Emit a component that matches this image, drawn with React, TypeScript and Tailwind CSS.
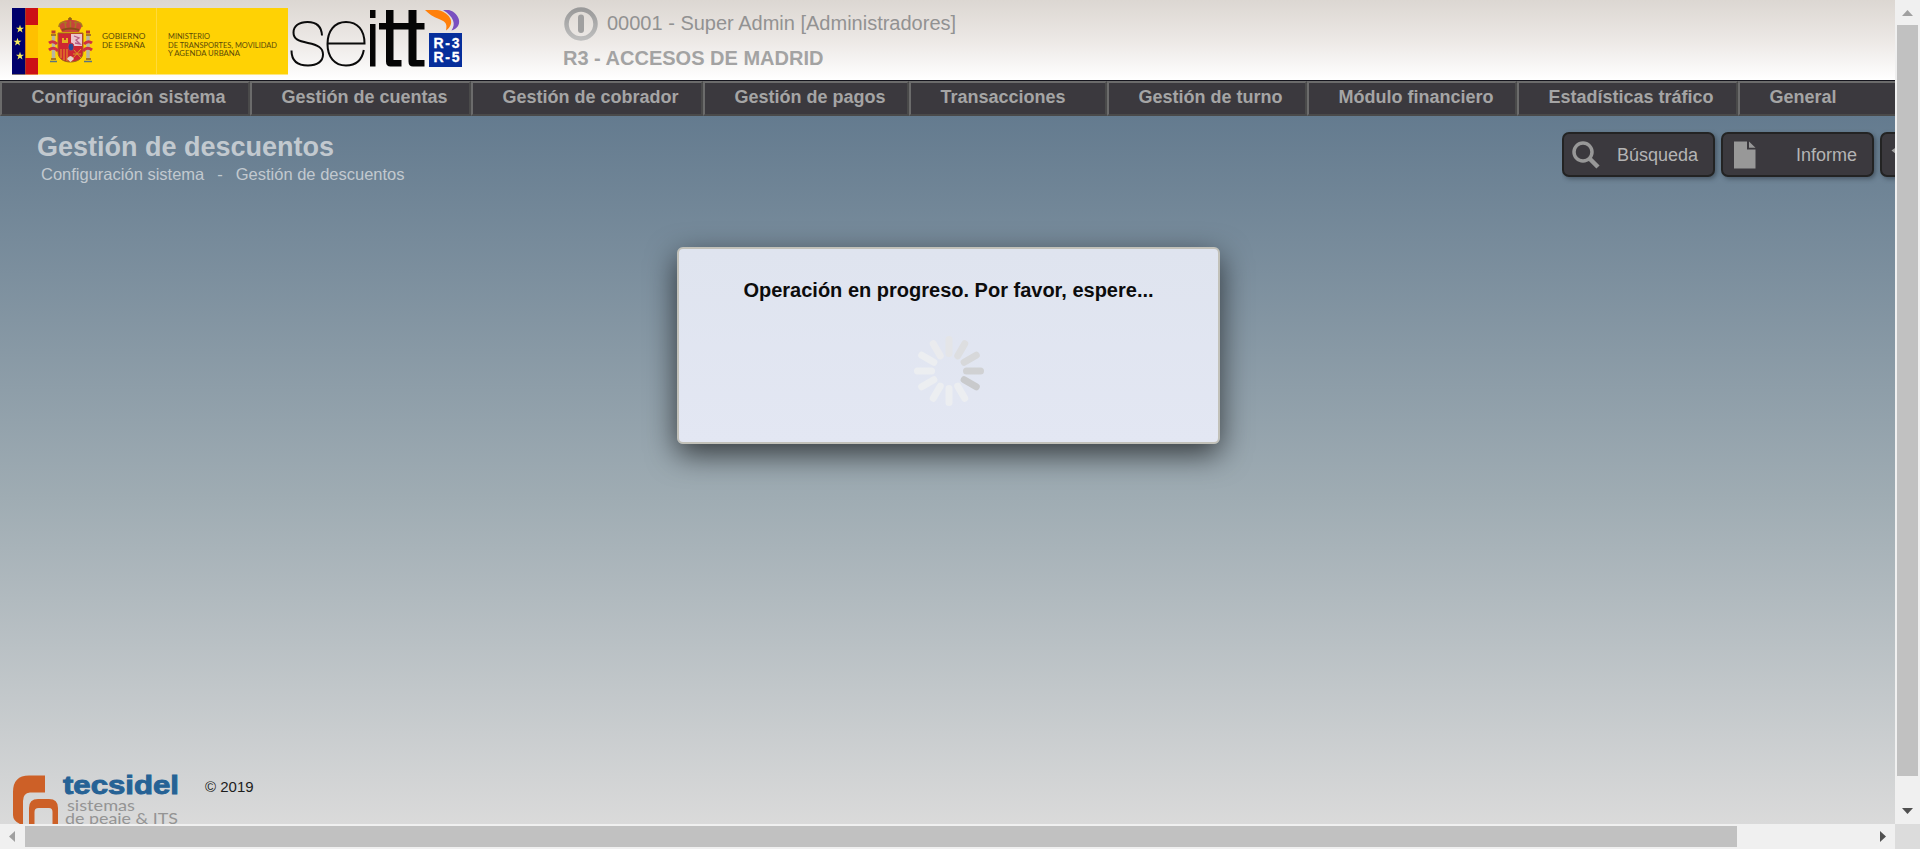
import React from "react";

const menu = [
  { label: "Configuración sistema", width: "w-[250px]" },
  { label: "Gestión de cuentas", width: "w-[221px]" },
  { label: "Gestión de cobrador", width: "w-[232px]" },
  { label: "Gestión de pagos", width: "w-[206px]" },
  { label: "Transacciones", width: "w-[198px]" },
  { label: "Gestión de turno", width: "w-[200px]" },
  { label: "Módulo financiero", width: "w-[210px]" },
  { label: "Estadísticas tráfico", width: "w-[221px]" },
  { label: "General", width: "w-[200px]" },
];

const spokes = [
  "#e4e5e8", "#dddee0", "#d7d8da", "#d0d1d3", "#c9cacc", "#eceef1",
  "#eceef1", "#eceef1", "#eceef1", "#eceef1", "#eceef1", "#eaebee",
];

function Star({ x, y }: { x: number; y: number }) {
  return (
    <path
      transform={`translate(${x} ${y})`}
      d="M0-4.2 1-1.3H4L1.6.5 2.5 3.5 0 1.7-2.5 3.5-1.6.5-4-1.3H-1Z"
      fill="#f4ea5c"
    />
  );
}

function Logos() {
  return (
    <svg width="455" height="68" viewBox="12 7 455 68" className="block">
      <rect x="12" y="8" width="276" height="66.500" fill="#ffd204" />
      <path d="M156.500 8V74" stroke="#ffda3a" />
      <rect x="12" y="8" width="13.500" height="66.500" fill="#00006c" />
      <rect x="25.500" y="8" width="12.500" height="66.500" fill="#cc1016" />
      <rect x="25.500" y="25" width="12.500" height="33" fill="#ffc000" />
      <Star x={20} y={29} />
      <Star x={17.500} y={42} />
      <Star x={20} y={56} />

      <g>
        <path d="M70 17v5M68 19h4" stroke="#8a5a18" strokeWidth="1.300" />
        <path d="M59 26c1-5 6-6 11.500-6S81 21 82 26l-3 6H62Z" fill="#c7443a" />
        <path d="M59 27c0-5 5-6 8-4M82 27c0-5-5-6-8-4M70.500 21v8M65 23l1 6M76 23l-1 6" fill="none" stroke="#a87822" strokeWidth="1.500" />
        <path d="M62 30q8.500-3 17 0" fill="none" stroke="#8a4a1a" strokeWidth="2" />
        <path d="M58 33H83V52C83 59 77 62 70.500 62S58 59 58 52Z" fill="#ce2632" stroke="#9d6a1c" />
        <path d="M71 34H82V46H71Z" fill="#ebc5cc" />
        <path d="m74 36 5 2-3 2 4 4-5-1" fill="none" stroke="#b75b83" strokeWidth="1.300" />
        <path d="M62 43v-5h2v2h2v-2h2v5Z" fill="#e4ae20" />
        <path d="M61 49v9M64 49v11M67 49v12" stroke="#e8a020" />
        <path d="m73 49 8 9m0-9-8 9m0-4h8" stroke="#d99a22" fill="none" />
        <ellipse cx="71" cy="47" rx="3" ry="4" fill="#284a96" stroke="#cf3440" />
        <path d="M67 59q3.500-6 7 0l-3.500 3Z" fill="#e5d5c7" />
        <path d="M53.500 36V58M88 36V58" stroke="#b9b5a0" strokeWidth="3.500" />
        <path d="M49 43q4-3 8 1M49 50q5-4 9 1M92 43q-4-3-8 1M92 50q-5-4-9 1" fill="none" stroke="#cf3440" strokeWidth="3" />
        <path d="M51 35h5M86 35h5M51 59h5M86 59h5" stroke="#a87822" strokeWidth="2" />
        <path d="M51.500 32h4M86 32h4" stroke="#bd3e2c" strokeWidth="3" />
        <path d="M50 61.500h7M84 61.500h8" stroke="#5c7480" strokeWidth="1.500" />
      </g>

      <g fill="#5b4a08" fontFamily="Lato, sans-serif" fontSize="7.500">
        <text x="102" y="38.500" textLength="43.500" lengthAdjust="spacingAndGlyphs">GOBIERNO</text>
        <text x="102" y="47.500" textLength="43" lengthAdjust="spacingAndGlyphs">DE ESPAÑA</text>
        <text x="168" y="38.500" textLength="42" lengthAdjust="spacingAndGlyphs">MINISTERIO</text>
        <text x="168" y="47.500" textLength="109" lengthAdjust="spacingAndGlyphs">DE TRANSPORTES, MOVILIDAD</text>
        <text x="168" y="56" textLength="72" lengthAdjust="spacingAndGlyphs">Y AGENDA URBANA</text>
      </g>

      <g fill="none" stroke="#0b0b0b" strokeWidth="2">
        <path d="M322 35.500C321.500 26 316 22 307.500 22C299 22 293.500 26 293.500 32.500C293.500 39 298 41 308 43C318 45 323 48 323 54.500C323 61.500 317 65.500 308 65.500C297 65.500 291.500 60 291.500 50.500" />
        <path d="M327.500 43.500H364.500C364.500 30 357.500 22 346 22C334.500 22 327.500 31 327.500 44C327.500 57 334.500 65.500 346 65.500C355.500 65.500 362 60 363.800 50" />
      </g>
      <path d="M370 10h5.500v8H370ZM370 24h5.500v42.500H370ZM386 10h7.500v13h15V10h8v13h8v6.500h-8V60h8v6.500h-11.500q-4.500 0-4.500-5V29.500h-15V60h8v6.500H390.500q-4.500 0-4.500-5V29.500h-7V23h7Z" fill="#050505" />
      <path d="M443 10H449C460 13 464 27 451.500 30.500C456 24 454 17 443 10Z" fill="#7950c0" />
      <path d="M425 10H437C447 11 458 22 446 30.500C447 25 447 22 439 19C433 17 429 14 425 10Z" fill="#ff800b" />
      <rect x="429" y="33" width="33" height="34" fill="#062e9b" />
      <g fill="#fff" fontFamily="Liberation Sans, sans-serif" fontWeight="bold" fontSize="14">
        <text x="433.500" y="48.300" textLength="26" stroke="#fff" strokeWidth=".3">R-3</text>
        <text x="433.500" y="61.500" textLength="26" stroke="#fff" strokeWidth=".3">R-5</text>
      </g>
    </svg>
  );
}

function Header() {
  return (
    <header className="flex h-20 shrink-0 bg-linear-to-b from-[#dcd7d2] via-[#ece8e5] to-white pl-3">
      <div className="w-[551px] shrink-0 pt-[7px]">
        <Logos />
      </div>
      <div className="pt-[7px] text-[#9b9b9b]">
        <div className="flex h-[34px] items-center gap-[9px] text-[20px] leading-none">
          <svg width="35" height="35" viewBox="0 0 35 35">
            <defs>
              <linearGradient id="power" x1="0" y1="0" x2="0" y2="1">
                <stop offset="0" stopColor="#9a9a9a" />
                <stop offset="1" stopColor="#bdbdbd" />
              </linearGradient>
            </defs>
            <circle cx="18" cy="17" r="14.500" fill="none" stroke="url(#power)" strokeWidth="4.500" />
            <rect x="15" y="7.500" width="6" height="18.500" rx="3" fill="#a0a0a0" />
          </svg>
          <span className="-mt-[2px] whitespace-nowrap text-[#929292]">00001 - Super Admin [Administradores]</span>
        </div>
        <div className="mt-[6px] text-[20px] leading-[23px] font-bold whitespace-nowrap text-[#a3a3a3]">
          R3 - ACCESOS DE MADRID
        </div>
      </div>
    </header>
  );
}

function ToolButton({ label, children }: { label?: string; children: React.ReactNode }) {
  return (
    <div className="flex h-[45px] w-[153px] shrink-0 items-center justify-between rounded-[7px] border-2 border-[#232323] bg-[#3b393e] pr-[15px] pl-[8px] text-[18px] text-[#b4b4b4] shadow-[2px_2px_4px_rgba(40,50,60,0.5)]">
      {children}
      <span className="pt-[2px]">{label}</span>
    </div>
  );
}

function Footer() {
  return (
    <footer className="mt-auto flex h-[51px] overflow-hidden pl-3">
      <svg width="170" height="51" viewBox="12 773 170 51" className="shrink-0">
        <path d="M45 775.500V792.500H30Q23 793 23 801V824H20Q13 821 13 815V792Q13 775.500 29 775.500Z" fill="#cd6027" />
        <path d="M29 824V808Q29 799 38 799H49Q58 799 58 808V824H52.500V812Q52.500 808 49 808H38.500Q34.500 808 34.500 812V824Z" fill="#cd6027" />
        <text x="63" y="793.700" fill="#266295" stroke="#266295" strokeWidth=".9" fontFamily="Liberation Sans, sans-serif" fontWeight="bold" fontSize="26" textLength="116" lengthAdjust="spacingAndGlyphs">tecsidel</text>
        <g fill="#949494" fontFamily="Lato, sans-serif" fontSize="16">
          <text x="67" y="810.500" textLength="68" lengthAdjust="spacingAndGlyphs">sistemas</text>
          <text x="65" y="824.300" textLength="113" lengthAdjust="spacingAndGlyphs">de peaje &amp; ITS</text>
        </g>
      </svg>
      <span className="ml-[23px] pt-[5px] text-[15px] leading-[18px] text-[#1d1d1d]">© 2019</span>
    </footer>
  );
}

function Spinner() {
  return (
    <svg width="72" height="80" viewBox="-36 -40 72 80">
      {spokes.map((color, i) => {
        const a = (i * Math.PI) / 6;
        const rx = Math.sin(a);
        const ry = -Math.cos(a);
        return (
          <line
            key={i}
            x1={rx * 17.500}
            y1={ry * 17.500}
            x2={rx * 31.500}
            y2={ry * 31.500}
            stroke={color}
            strokeWidth="7"
            strokeLinecap="round"
          />
        );
      })}
    </svg>
  );
}

export default function App() {
  return (
    <div className="relative grid h-[849px] w-[1920px] grid-cols-[1895px_25px] grid-rows-[824px_25px] overflow-hidden bg-[#f0f0f0] font-['Liberation_Sans',sans-serif]">
      <div className="flex min-w-0 flex-col overflow-hidden">
        <Header />
        <nav className="flex h-9 shrink-0 overflow-hidden border-t border-[#14141c] bg-[#3b393e]">
          {menu.map((item) => (
            <div
              key={item.label}
              className={`${item.width} shrink-0 border-2 border-t-[#6b6b6b] border-r-[#4a4a4a] border-b-[#4a4a4a] border-l-[#6b6b6b] pl-[29.500px] text-[18px] leading-[29px] font-bold whitespace-nowrap text-[#a5a5a5]`}
            >
              {item.label}
            </div>
          ))}
        </nav>
        <main className="flex min-h-0 flex-1 flex-col bg-linear-to-b from-[#647b8f] from-0% via-[#9facb3] via-54% to-[#dadada] to-100%">
          <div className="flex items-start justify-between">
            <div className="pt-[15px] pl-[37px] text-[#c2c9cf]">
              <h1 className="text-[27px] leading-[32px] font-bold">Gestión de descuentos</h1>
              <div className="flex gap-[13px] pl-[4px] text-[16.500px] leading-[22px]">
                <span>Configuración sistema</span>
                <span>-</span>
                <span>Gestión de descuentos</span>
              </div>
            </div>
            <div className="flex w-[333px] gap-[6px] overflow-hidden pt-4 pb-2">
              <ToolButton label="Búsqueda">
                <svg width="28" height="28" viewBox="0 0 28 28" fill="none" stroke="#989898">
                  <circle cx="11" cy="11" r="9" strokeWidth="3.500" />
                  <path d="m17.500 17.500 8.500 8.500" strokeWidth="4.500" />
                </svg>
              </ToolButton>
              <ToolButton label="Informe">
                <svg width="28" height="28" viewBox="0 0 28 28" fill="#989898">
                  <path d="M3 .5H16V8.500H24.500V27.500H3ZM18 .5 24.500 6.800H18Z" />
                </svg>
              </ToolButton>
              <ToolButton>
                <svg width="28" height="28" viewBox="0 0 28 28" fill="none" stroke="#a5a5a5">
                  <path d="m10 5-6 4.500 6 4.500M4 9.500h12q9 0 9 8t-9 8H8" strokeWidth="3" />
                </svg>
              </ToolButton>
            </div>
          </div>
          <Footer />
        </main>
      </div>

      <div className="flex flex-col items-center justify-between pt-[10px] pb-[10px]">
        <svg width="11" height="6" viewBox="0 0 11 6" className="shrink-0"><path d="M0 6 5.500 0 11 6Z" fill="#a0a0a0" /></svg>
        <div className="mt-[9px] mb-auto h-[751px] w-[21px] bg-[#c1c1c1]" />
        <svg width="11" height="6" viewBox="0 0 11 6" className="shrink-0"><path d="M0 0 5.500 6 11 0Z" fill="#505050" /></svg>
      </div>
      <div className="flex items-center justify-between pr-[9px] pl-[9px]">
        <svg width="6" height="11" viewBox="0 0 6 11" className="shrink-0"><path d="M6 0 0 5.500 6 11Z" fill="#a0a0a0" /></svg>
        <div className="mr-auto ml-[10px] h-[21px] w-[1712px] bg-[#c1c1c1]" />
        <svg width="6" height="11" viewBox="0 0 6 11" className="shrink-0"><path d="M0 0 6 5.500 0 11Z" fill="#505050" /></svg>
      </div>
      <div className="bg-[#dcdcdc]" />

      <div className="absolute top-[247px] left-[677px] flex h-[197px] w-[543px] flex-col items-center rounded-[6px] border-2 border-[#c2c1b9] bg-linear-to-b from-[#dfe4ef] to-[#e3e7f3] pt-[29px] shadow-[0_10px_30px_rgba(0,0,0,0.65)]">
        <div className="text-[20px] leading-[24px] font-bold whitespace-nowrap text-[#0c0c0c]">
          Operación en progreso. Por favor, espere...
        </div>
        <div className="mt-[28.500px]">
          <Spinner />
        </div>
      </div>
    </div>
  );
}
